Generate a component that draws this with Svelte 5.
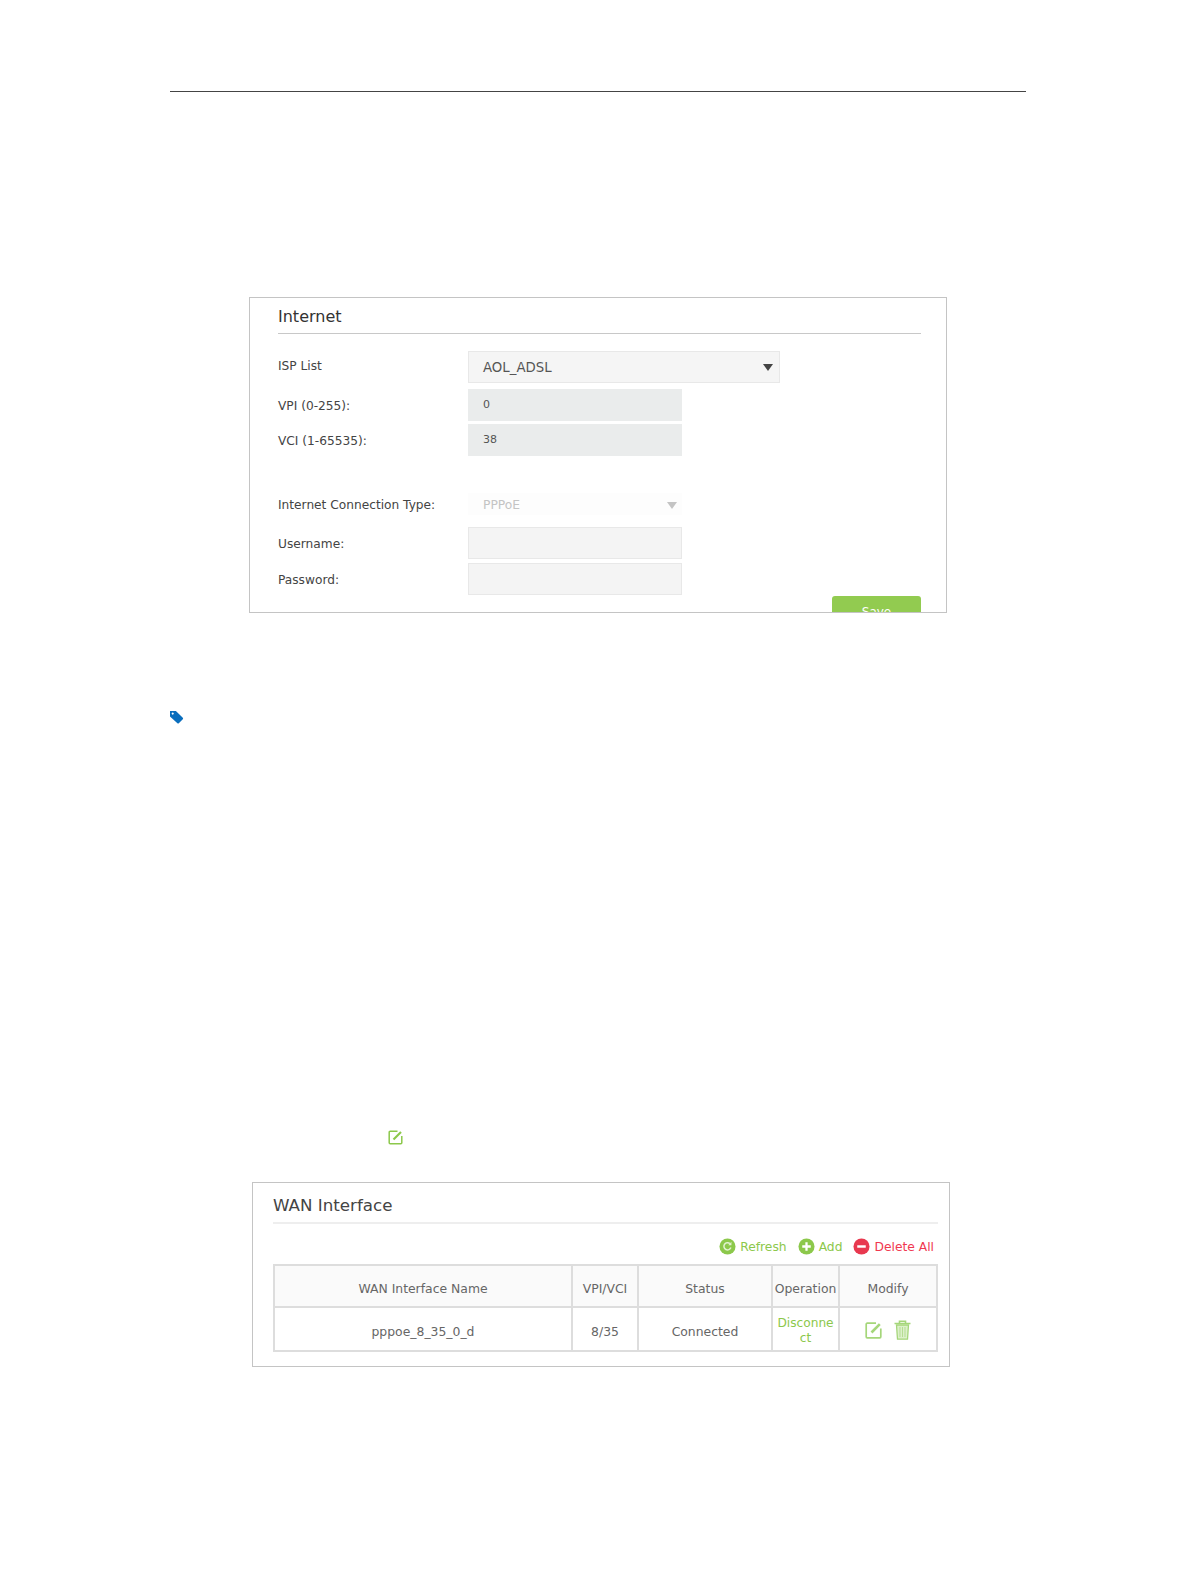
<script>
  const columns = ["WAN Interface Name", "VPI/VCI", "Status", "Operation", "Modify"];
</script>

<div class="page">
  <div class="rule"></div>

  <section class="panel internet">
    <h2>Internet</h2>
    <div class="row first">
      <span class="label isp">ISP List</span>
      <div class="field select">AOL_ADSL<span class="arrow"></span></div>
    </div>
    <div class="row tight">
      <span class="label">VPI (0-255):</span>
      <div class="field filled">0</div>
    </div>
    <div class="row close">
      <span class="label">VCI (1-65535):</span>
      <div class="field filled">38</div>
    </div>
    <div class="row type">
      <span class="label">Internet Connection Type:</span>
      <div class="field disabled">PPPoE<span class="arrow pale"></span></div>
    </div>
    <div class="row user">
      <span class="label">Username:</span>
      <div class="field"></div>
    </div>
    <div class="row pass">
      <span class="label">Password:</span>
      <div class="field"></div>
    </div>
    <div class="save-row"><button>Save</button></div>
  </section>

  <svg class="tag" viewBox="0 0 14 14" width="15" height="14" aria-hidden="true">
    <path d="M.5 1 H6.4 L13.3 7.8 a1 1 0 0 1 0 1.4 L9.3 13.2 a1 1 0 0 1 -1.4 0 L.5 6.6 Z M3.2 2.6 a1 1 0 1 0 .01 0 Z" fill="#0a6ebd" fill-rule="evenodd" />
  </svg>

  <svg class="edit-inline" viewBox="0 0 15 15" width="15" height="15" aria-hidden="true">
    <path d="M9.5 1.2 H2.2 a1 1 0 0 0 -1 1 V12.8 a1 1 0 0 0 1 1 H12.8 a1 1 0 0 0 1 -1 V6" fill="none" stroke="#8cc84b" stroke-width="1.5" />
    <path d="M5.5 9.5 L13 2" stroke="#8cc84b" stroke-width="2.2" />
  </svg>

  <section class="panel wan">
    <h2>WAN Interface</h2>
    <div class="actions">
      <span class="action green">
        <svg viewBox="0 0 18 18" width="17" height="17" aria-hidden="true">
          <circle cx="9" cy="9" r="8.5" fill="#8cc84b" />
          <path d="M12.6 10 A3.8 3.8 0 1 1 11.6 6" fill="none" stroke="#e2f2d0" stroke-width="1.6" />
          <path d="M13.2 4 V7.6 H9.8 Z" fill="#e2f2d0" />
        </svg>
        Refresh
      </span>
      <span class="action green">
        <svg viewBox="0 0 18 18" width="17" height="17" aria-hidden="true">
          <circle cx="9" cy="9" r="8.5" fill="#8cc84b" />
          <path d="M9 4.5 V13.5 M4.5 9 H13.5" stroke="#fff" stroke-width="2.4" />
        </svg>
        Add
      </span>
      <span class="action red">
        <svg viewBox="0 0 18 18" width="17" height="17" aria-hidden="true">
          <circle cx="9" cy="9" r="8.5" fill="#e8384f" />
          <path d="M4.5 9 H13.5" stroke="#fff" stroke-width="2.6" />
        </svg>
        Delete All
      </span>
    </div>
    <table>
      <thead>
        <tr>
          {#each columns as col}
            <th>{col}</th>
          {/each}
        </tr>
      </thead>
      <tbody>
        <tr>
          <td>pppoe_8_35_0_d</td>
          <td>8/35</td>
          <td>Connected</td>
          <td class="link">Disconne<br />ct</td>
          <td>
            <div class="icons">
              <svg viewBox="0 0 17 17" width="17" height="17" aria-hidden="true">
                <path d="M11 1.2 H2.2 a1 1 0 0 0 -1 1 V14.8 a1 1 0 0 0 1 1 H14.8 a1 1 0 0 0 1 -1 V6.5" fill="none" stroke="#a5d67a" stroke-width="1.7" />
                <path d="M6.5 10.5 L14.8 2.2" stroke="#a5d67a" stroke-width="2.6" />
              </svg>
              <svg viewBox="0 0 17 20" width="17" height="20" aria-hidden="true">
                <path d="M5.5 3 V1.2 H11.5 V3 M.5 3.5 H16.5" fill="none" stroke="#a5d67a" stroke-width="1.6" />
                <path d="M2.5 5 H14.5 L13.5 19.2 H3.5 Z" fill="#dcf0ca" stroke="#a5d67a" stroke-width="1.3" />
                <path d="M6 7 V17 M8.5 7 V17 M11 7 V17" stroke="#b5dd92" stroke-width="1" />
              </svg>
            </div>
          </td>
        </tr>
      </tbody>
    </table>
  </section>
</div>

<style>
  :global(body) {
    margin: 0;
    background: #fff;
  }

  .page {
    width: 856px;
    height: 1582px;
    margin-left: 170px;
    padding-top: 91px;
    box-sizing: border-box;
    font-family: "DejaVu Sans", sans-serif;
  }

  .rule {
    height: 1px;
    background: #444;
  }

  .panel {
    box-sizing: border-box;
    border: 1px solid #c4c4c4;
    overflow: hidden;
  }

  h2 {
    margin: 0;
    font-weight: 400;
  }

  .internet {
    width: 698px;
    height: 316px;
    margin: 205px 0 0 79px;
    padding: 0 25px 0 28px;
  }

  .internet h2 {
    height: 35px;
    line-height: 38px;
    font-size: 16px;
    color: #333;
    border-bottom: 1px solid #c8c8c8;
  }

  .row {
    display: flex;
    align-items: center;
  }

  .first { margin-top: 17px; }
  .tight { margin-top: 6px; }
  .close { margin-top: 3px; }
  .type { margin-top: 37px; }
  .user { margin-top: 12px; }
  .pass { margin-top: 4px; }

  .label {
    width: 190px;
    padding-top: 2px;
    font-size: 12.2px;
    color: #444;
  }

  .isp { margin-top: -4px; }

  .field {
    position: relative;
    width: 214px;
    height: 32px;
    box-sizing: border-box;
    padding-left: 14px;
    line-height: 32px;
    font-size: 11px;
    color: #555;
    background: #f4f4f4;
    border: 1px solid #e8e8e8;
  }

  .select {
    width: 312px;
    font-size: 13.3px;
    background: #f5f5f5;
  }

  .filled {
    background: #eaecec;
    border-color: #eaecec;
    line-height: 30px;
  }

  .disabled {
    height: 22px;
    line-height: 22px;
    background: #fdfdfd;
    border-color: #fdfdfd;
    color: #c4c4c4;
    font-size: 12.3px;
  }

  .arrow {
    position: absolute;
    right: 6px;
    top: 12px;
    border-left: 5px solid transparent;
    border-right: 5px solid transparent;
    border-top: 7px solid #444;
  }

  .pale {
    right: 4px;
    top: 8px;
    border-top-color: #c4c4c4;
  }

  .save-row {
    display: flex;
    justify-content: flex-end;
    margin-top: 1px;
  }

  button {
    width: 89px;
    height: 32px;
    flex: none;
    padding: 0;
    border: 0;
    border-radius: 3px;
    background: #92cb50;
    color: #fff;
    font-family: inherit;
    font-size: 12px;
  }

  .tag {
    display: block;
    margin: 97px 0 0 -1px;
  }

  .edit-inline {
    display: block;
    margin: 406px 0 0 218px;
  }

  .wan {
    width: 698px;
    height: 185px;
    margin: 37px 0 0 82px;
    padding: 0 11px 0 20px;
  }

  .wan h2 {
    height: 39px;
    line-height: 45px;
    font-size: 16.7px;
    color: #444;
    border-bottom: 2px solid #eee;
  }

  .actions {
    display: flex;
    justify-content: flex-end;
    align-items: center;
    gap: 11px;
    height: 35px;
    padding: 5px 4px 0 0;
    font-size: 12.3px;
  }

  .action {
    display: flex;
    align-items: center;
    gap: 4px;
  }

  .green { color: #8cc84b; }
  .red { color: #f0384f; }

  table {
    width: 100%;
    table-layout: fixed;
    border-collapse: collapse;
    font-size: 12.4px;
    color: #666;
  }

  th, td {
    border: 2px solid #ddd;
    padding: 4px 0 0;
    text-align: center;
    font-weight: 400;
  }

  th {
    height: 36px;
    background: #fafafa;
  }

  th:nth-child(1) { width: 296px; }
  th:nth-child(2) { width: 64px; }
  th:nth-child(3) { width: 132px; }
  th:nth-child(4) { width: 65px; }

  td {
    height: 38px;
  }

  .link {
    color: #8cc84b;
    font-size: 12.2px;
    line-height: 15px;
  }

  .icons {
    display: flex;
    justify-content: center;
    align-items: center;
    gap: 12px;
    margin-top: -2px;
  }

  svg {
    flex: none;
  }
</style>
